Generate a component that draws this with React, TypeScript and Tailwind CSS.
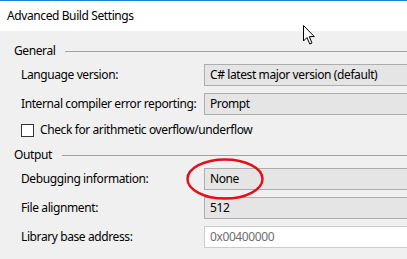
const font = { fontFamily: '"Noto Sans", "Open Sans", sans-serif' };

function GroupHeader({ title, mt }: { title: string; mt: string }) {
  return (
    <div className={`flex h-[16px] items-center pl-[14px] ${mt}`}>
      <span className="text-[12px] leading-none tracking-[-0.4px] text-black">{title}</span>
      <div className="ml-[10px] h-px flex-1 bg-[#a0a0a0]" />
    </div>
  );
}

function Row({ label, value, disabled, mt }: { label: string; value: string; disabled?: boolean; mt: string }) {
  return (
    <div className={`flex h-[22px] items-center pl-[21px] ${mt}`}>
      <span className="w-[183px] shrink-0 whitespace-nowrap text-[12px] leading-none tracking-[-0.4px] text-black">
        {label}
      </span>
      <div
        className={`flex h-[22px] w-[230px] shrink-0 items-center border px-[5px] text-[12px] leading-none tracking-[-0.4px] ${
          disabled ? "border-[#cccccc] bg-white text-[#6d6d6d]" : "border-[#adadad] bg-[#e5e5e5] text-black"
        }`}
      >
        {value}
      </div>
    </div>
  );
}

export default function App() {
  return (
    <div className="relative h-[259px] w-[407px] overflow-hidden bg-[#f0f0f0]" style={font}>
      <div className="flex h-[31px] items-center border-t border-[#1883d7] bg-white pl-[7px] text-[12px] tracking-[-0.4px] text-black">
        Advanced Build Settings
      </div>

      <GroupHeader title="General" mt="mt-[12px]" />
      <Row label="Language version:" value="C# latest major version (default)" mt="mt-[5px]" />
      <Row label="Internal compiler error reporting:" value="Prompt" mt="mt-[7px]" />
      <div className="mt-[4px] flex h-[22px] items-center pl-[21px]">
        <div className="h-[13px] w-[13px] border border-[#333333] bg-white" />
        <span className="ml-[6px] whitespace-nowrap text-[12px] leading-none tracking-[-0.4px] text-black">
          Check for arithmetic overflow/underflow
        </span>
      </div>

      <GroupHeader title="Output" mt="mt-[6px]" />
      <Row label="Debugging information:" value="None" mt="mt-[5px]" />
      <Row label="File alignment:" value="512" mt="mt-[7px]" />
      <Row label="Library base address:" value="0x00400000" disabled mt="mt-[7px]" />

      <svg className="absolute left-[185px] top-[157px]" width="80" height="44" viewBox="0 0 80 44">
        <ellipse cx="40" cy="22" rx="37.5" ry="19.5" fill="none" stroke="#e3101c" strokeWidth="2.5" />
      </svg>

      <svg className="absolute left-[302px] top-[24px]" width="14" height="22" viewBox="0 0 14 22">
        <path
          d="M1.5 1.5 L1.5 17 L5 13.5 L7.8 20 L10 19 L7.3 12.6 L12.3 12.6 Z"
          fill="white"
          stroke="black"
          strokeWidth="1"
          strokeLinejoin="miter"
        />
      </svg>
    </div>
  );
}
